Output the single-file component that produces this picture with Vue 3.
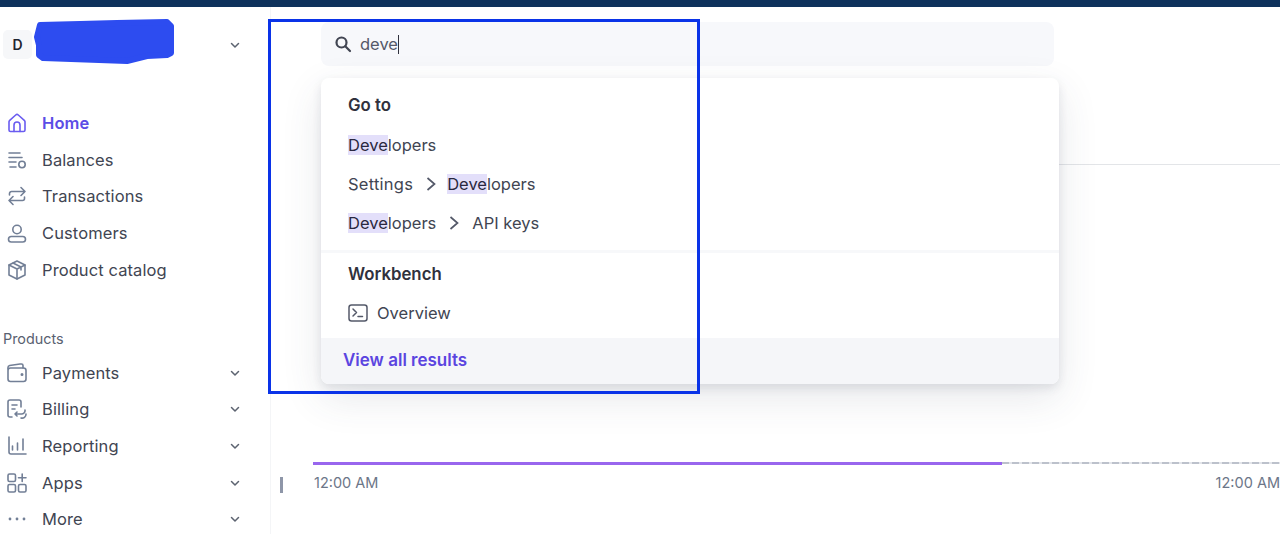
<template>
  <div class="page">
    <div class="top-strip"></div>
    <div class="layout">
      <aside class="sidebar">
        <div class="account">
          <span class="avatar">D</span>
          <svg class="scribble" width="142" height="44" viewBox="0 0 142 44">
            <path d="M3 17 L6 5 L46 4 L83 3 L133 2 L137 6 L137 33 L133 35 L113 36 L93 41 L9 38 L5 35 L5 25 Z" />
          </svg>
          <svg class="chevron" width="12" height="12" viewBox="0 0 12 12"><path d="M2.500 4.500L6 8l3.500-3.500" /></svg>
        </div>

        <nav class="nav main-nav">
          <a v-for="item in mainNav" :key="item.label" :class="['nav-item', { active: item.active }]">
            <svg class="nav-icon" width="20" height="20" viewBox="0 0 20 20" v-html="item.icon"></svg>
            <span>{{ item.label }}</span>
          </a>
        </nav>

        <div class="nav-title">Products</div>
        <nav class="nav">
          <a v-for="item in productNav" :key="item.label" class="nav-item">
            <svg class="nav-icon" width="20" height="20" viewBox="0 0 20 20" v-html="item.icon"></svg>
            <span>{{ item.label }}</span>
            <svg class="chevron" width="12" height="12" viewBox="0 0 12 12"><path d="M2.500 4.500L6 8l3.500-3.500" /></svg>
          </a>
        </nav>
      </aside>

      <main class="content">
        <div class="search">
          <svg width="18" height="18" viewBox="0 0 18 18" class="search-icon">
            <circle cx="7.5" cy="7.5" r="5" />
            <path d="M11.3 11.3L16 16" />
          </svg>
          <span class="search-text">deve</span><span class="caret"></span>
        </div>

        <div class="tabs-line"></div>

        <div class="chart">
          <div class="chart-line">
            <div class="line-done"></div>
            <div class="line-rest"></div>
          </div>
          <div class="chart-labels">
            <span>12:00 AM</span>
            <span>12:00 AM</span>
          </div>
          <span class="tick"></span>
        </div>

        <div class="dropdown">
          <div class="group first">
            <div class="group-title">Go to</div>
            <div class="result"><span><mark>Deve</mark>lopers</span></div>
            <div class="result">
              <span class="crumb-start">Settings</span>
              <svg class="crumb" width="12" height="16" viewBox="0 0 12 16"><path d="M2.500 2l7 6-7 6" /></svg>
              <span><mark>Deve</mark>lopers</span>
            </div>
            <div class="result">
              <span><mark>Deve</mark>lopers</span>
              <svg class="crumb" width="12" height="16" viewBox="0 0 12 16"><path d="M2.500 2l7 6-7 6" /></svg>
              API keys
            </div>
          </div>
          <div class="group second">
            <div class="group-title">Workbench</div>
            <div class="result with-icon">
              <svg width="20" height="18" viewBox="0 0 20 18" class="term">
                <rect x="1" y="1" width="18" height="16" rx="2.500" />
                <path d="M5 5l3.500 3.500L5 12M10 12.500h4.500" />
              </svg>
              Overview
            </div>
          </div>
          <div class="dropdown-footer">View all results</div>
        </div>
      </main>
    </div>
    <div class="annotation"></div>
  </div>
</template>

<script setup>
const dots = [3, 10, 17]
  .map((x) => `<circle cx="${x}" cy="10" r="1.400" fill="#727f96" stroke="none"/>`)
  .join('')

const mainNav = [
  { label: 'Home', active: true, icon: '<path d="M2 17V8.800a2 2 0 0 1 .7-1.500L8.700 2a2 2 0 0 1 2.600 0l6 5.300a2 2 0 0 1 .7 1.500V17a1.500 1.500 0 0 1-1.500 1.500h-13A1.500 1.500 0 0 1 2 17z"/><path d="M7 18.500v-6.500a3 3 0 0 1 6 0v6.500"/>' },
  { label: 'Balances', icon: '<path d="M2 3h11M2 7.500h13M2 12h7M3 17h6"/><circle cx="15" cy="14.500" r="3.200"/>' },
  { label: 'Transactions', icon: '<path d="M2.500 9V7.500a2 2 0 0 1 2-2H18M14 1.500l4 4-4 4M17.500 11v1.500a2 2 0 0 1-2 2H2M6 10.500l-4 4 4 4"/>' },
  { label: 'Customers', icon: '<circle cx="10" cy="6.500" r="4.200"/><rect x="1.500" y="13.500" width="17" height="5.500" rx="2.750"/>' },
  { label: 'Product catalog', icon: '<path d="M10 1l8 4v10l-8 4-8-4V5z"/><path d="M2 5l8 4 8-4M10 9v10M6 3l8 4v3"/>' }
]

const productNav = [
  { label: 'Payments', icon: '<path d="M1 6V4.500a2 2 0 0 1 1.600-2L13 1h1.500a1.500 1.500 0 0 1 1.500 1.500V5"/><rect x="1" y="5" width="18" height="13.500" rx="2.500"/><circle cx="15" cy="11.500" r=".7"/>' },
  { label: 'Billing', icon: '<path d="M5 18H3a2 2 0 0 1-2-2V3a2 2 0 0 1 2-2h9a2 2 0 0 1 2 2v5"/><path d="M5 6h5M5 10h3"/><path d="M10 13l-2 2 2 2M8 15h6a3.500 3.500 0 0 0 4-4M19 15a4 4 0 0 1-5 4"/>' },
  { label: 'Reporting', icon: '<path d="M2 1v15a2 2 0 0 0 2 2h15M5.500 10v4M10.500 7v7M16 3v11"/>' },
  { label: 'Apps', icon: '<rect x="1" y="1" width="7.500" height="7.500" rx="1.500"/><rect x="1" y="11.500" width="7.500" height="7.500" rx="1.500"/><rect x="11.500" y="11.500" width="7.500" height="7.500" rx="1.500"/><path d="M15.200 1v7.500M11.500 4.700H19"/>' },
  { label: 'More', icon: dots }
]
</script>

<style scoped>
.page {
  position: relative;
  width: 1280px;
  height: 534px;
  overflow: hidden;
  background: #fff;
  font-family: Inter, "Liberation Sans", sans-serif;
  color: #414552;
}

.top-strip {
  height: 7px;
  background: #0e325c;
}

.layout {
  display: flex;
  height: 527px;
}

.sidebar {
  width: 271px;
  flex-shrink: 0;
  border-right: 1px solid #f4f5f7;
  padding-left: 3px;
  box-sizing: border-box;
}

.account {
  position: relative;
  display: flex;
  align-items: center;
  justify-content: space-between;
  height: 29px;
  margin-top: 23px;
  padding-right: 29px;
}

.avatar {
  width: 29px;
  height: 29px;
  border-radius: 5px;
  background: #f6f7f9;
  display: flex;
  align-items: center;
  justify-content: center;
  font-size: 14px;
  font-weight: 600;
  color: #1f2430;
}

.scribble {
  position: absolute;
  left: 31px;
  top: -10px;
  overflow: visible;
}

.scribble path {
  fill: #2d4cf0;
  stroke: #2d4cf0;
  stroke-width: 6;
  stroke-linejoin: round;
}

.chevron {
  fill: none;
  stroke: #5c6370;
  stroke-width: 1.500;
  stroke-linecap: round;
  stroke-linejoin: round;
}

.nav {
  display: flex;
  flex-direction: column;
}

.main-nav {
  margin-top: 46px;
}

.nav-item {
  display: flex;
  align-items: center;
  gap: 15px;
  height: 36.600px;
  padding-left: 4px;
  padding-right: 29px;
  font-size: 16.500px;
  letter-spacing: 0.1px;
}

.nav-item span {
  flex: 1;
}

.nav-item.active {
  color: #5b4ce6;
  font-weight: 600;
}

.nav-icon {
  flex-shrink: 0;
  fill: none;
  stroke: #727f96;
  stroke-width: 1.600;
  stroke-linecap: round;
  stroke-linejoin: round;
}

.nav-item.active .nav-icon {
  stroke: #6a5cf0;
}

.nav-title {
  margin-top: 42.500px;
  margin-bottom: 7px;
  font-size: 14.400px;
  line-height: 17px;
  color: #596171;
}

.content {
  position: relative;
  flex: 1;
  min-width: 0;
}

.search {
  display: flex;
  align-items: center;
  width: 733px;
  height: 44px;
  margin: 15px 0 0 50px;
  padding-left: 13px;
  box-sizing: border-box;
  background: #f7f8fb;
  border-radius: 8px;
}

.search-icon {
  fill: none;
  stroke: #414552;
  stroke-width: 2.200;
  stroke-linecap: round;
  margin-right: 8px;
}

.search-text {
  font-size: 16.500px;
  color: #545969;
}

.caret {
  width: 1px;
  height: 19px;
  background: #30313d;
}

.tabs-line {
  height: 1px;
  margin: 98px 0 0 100px;
  background: #e3e5e8;
}

.chart {
  position: relative;
  margin: 297px 0 0 42px;
}

.chart-line {
  display: flex;
  height: 3px;
}

.line-done {
  width: 689px;
  height: 3px;
  background: #9966ee;
}

.line-rest {
  flex: 1;
  height: 2px;
  background: repeating-linear-gradient(90deg, #bcc1cb 0 7px, #e3e5ea 7px 10px);
}

.chart-labels {
  display: flex;
  justify-content: space-between;
  margin-top: 9px;
  padding-left: 1px;
  font-size: 14.500px;
  line-height: 17px;
  color: #6c7688;
}

.tick {
  position: absolute;
  left: -33px;
  top: 15px;
  width: 3px;
  height: 16px;
  background: #8e96a8;
}

.dropdown {
  position: absolute;
  left: 50px;
  top: 71px;
  width: 738px;
  height: 306px;
  display: flex;
  flex-direction: column;
  overflow: hidden;
  background: #fff;
  border-radius: 8px;
  box-shadow: 0 4px 10px rgba(60, 66, 87, 0.12), 0 14px 40px rgba(60, 66, 87, 0.12);
}

.group {
  padding: 14px 27px 0;
  box-sizing: border-box;
  font-size: 16.500px;
}

.first {
  height: 172px;
}

.second {
  height: 88px;
  border-top: 3px solid #f7f8fa;
  padding-top: 8px;
}

.group-title {
  height: 26px;
  line-height: 26px;
  font-size: 16.800px;
  font-weight: 600;
  color: #30313d;
}

.result {
  display: flex;
  align-items: center;
  gap: 12px;
  height: 39.300px;
}

.group-title + .result {
  margin-top: 7px;
}

.second .group-title + .result {
  margin-top: 6px;
}

.result mark {
  background: #e3dffa;
  color: #2a2840;
}

.crumb-start {
  letter-spacing: 0.25px;
}

.crumb-start + .crumb {
  margin-right: -2px;
}

.with-icon {
  gap: 9px;
}

.crumb {
  fill: none;
  stroke: #545969;
  stroke-width: 1.700;
}

.term {
  fill: none;
  stroke: #545969;
  stroke-width: 1.500;
  stroke-linecap: round;
  stroke-linejoin: round;
}

.dropdown-footer {
  flex: 1;
  display: flex;
  align-items: center;
  padding: 0 0 2px 22px;
  background: #f5f6f9;
  color: #5b45e0;
  font-size: 17px;
  font-weight: 600;
}

.annotation {
  position: absolute;
  left: 268px;
  top: 19px;
  width: 432px;
  height: 375px;
  box-sizing: border-box;
  border: 3px solid #0a33e8;
  pointer-events: none;
}
</style>
